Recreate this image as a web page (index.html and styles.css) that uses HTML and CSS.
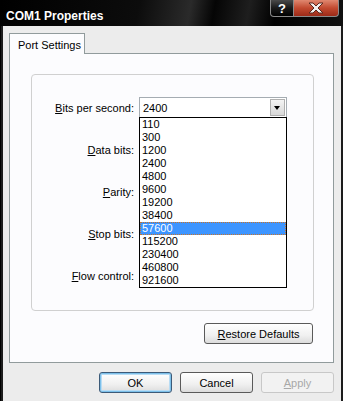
FILE: index.html
```html
<!DOCTYPE html>
<html lang="en">
<head>
  <meta charset="UTF-8">
  <title>COM1 Properties</title>
  <link rel="stylesheet" href="styles.css">
</head>
<body>
  <div class="window">
    <div class="titlebar">
      <span class="title">COM1 Properties</span>
      <div class="caption-btns">
        <span class="cap help">?</span>
        <span class="cap close">
          <svg width="18" height="12" viewBox="0 0 18 12">
            <path d="M2 1 L6 1 L9 4 L12 1 L16 1 L11 6 L16 11 L12 11 L9 8 L6 11 L2 11 L7 6 Z" fill="#f4f0ee" stroke="#5a2a20" stroke-width="1"/>
          </svg>
        </span>
      </div>
    </div>

    <div class="client">
      <div class="tabs">
        <div class="tab">Port Settings</div>
      </div>

      <div class="panel">
        <div class="group">
          <div class="row">
            <label><u>B</u>its per second:</label>
            <div class="combo">
              <span class="value">2400</span>
              <span class="drop-btn"></span>
              <ul class="droplist">
                <li>110</li>
                <li>300</li>
                <li>1200</li>
                <li>2400</li>
                <li>4800</li>
                <li>9600</li>
                <li>19200</li>
                <li>38400</li>
                <li class="selected">57600</li>
                <li>115200</li>
                <li>230400</li>
                <li>460800</li>
                <li>921600</li>
              </ul>
            </div>
          </div>
          <!-- the other combos sit under the open list -->
          <div class="row">
            <label><u>D</u>ata bits:</label>
            <div class="combo"><span class="drop-btn"></span></div>
          </div>
          <div class="row">
            <label><u>P</u>arity:</label>
            <div class="combo"><span class="drop-btn"></span></div>
          </div>
          <div class="row">
            <label><u>S</u>top bits:</label>
            <div class="combo"><span class="drop-btn"></span></div>
          </div>
          <div class="row">
            <label><u>F</u>low control:</label>
            <div class="combo"><span class="drop-btn"></span></div>
          </div>
        </div>

        <div class="restore-row">
          <button class="btn restore"><u>R</u>estore Defaults</button>
        </div>
      </div>

      <div class="footer">
        <button class="btn default">OK</button>
        <button class="btn">Cancel</button>
        <button class="btn disabled"><u>A</u>pply</button>
      </div>
    </div>
  </div>
</body>
</html>
```

FILE: styles.css
```css
body {
  margin: 0;
  padding: 0;
  background: #ffffff;
  font-family: "Liberation Sans", Arial, sans-serif;
  font-size: 11px;
  color: #000;
}
.window {
  width: 343px;
  height: 401px;
  background: #1c1c1c;
  border-left: 1px solid #000;
  box-sizing: border-box;
  display: flex;
  flex-direction: column;
}
.titlebar {
  height: 26px;
  display: flex;
  justify-content: space-between;
  align-items: flex-start;
  padding: 0 4px 0 5px;
  background: linear-gradient(100deg, #000 0%, #0c0c0c 40%, #2a2a2a 55%, #050505 62%, #1e1e1e 72%, #000 80%, #111 100%);
}
.title {
  color: #fff;
  font-weight: bold;
  font-size: 12px;
  margin-top: 9px;
}
.caption-btns {
  display: flex;
}
.cap {
  height: 17px;
  box-sizing: border-box;
  display: flex;
  align-items: center;
  justify-content: center;
  border: 1px solid #8a8a8a;
  border-top: none;
}
.help {
  width: 24px;
  border-radius: 0 0 0 4px;
  background: linear-gradient(#4a4a4a, #1a1a1a 50%, #000);
  color: #fff;
  font-weight: bold;
  font-size: 13px;
}
.close {
  width: 45px;
  border-left: none;
  border-radius: 0 0 4px 0;
  background: linear-gradient(#e08870, #c24a30 50%, #9c2a18);
}
.client {
  flex: 1;
  background: #ececec;
  margin: 0 2px 0 2px;
  padding: 7px 7px 0 6px;
  display: flex;
  flex-direction: column;
}
.tabs {
  display: flex;
  height: 20px;
}
.tab {
  width: 76px;
  box-sizing: border-box;
  background: #fcfcfe;
  border: 1px solid #919b9c;
  border-bottom: none;
  padding: 5px 0 0 8px;
  margin-bottom: -1px;
  position: relative;
  z-index: 1;
}
.panel {
  height: 310px;
  box-sizing: border-box;
  background: #fcfcfe;
  border: 1px solid #919b9c;
  display: flex;
  flex-direction: column;
}
.group {
  height: 237px;
  box-sizing: border-box;
  margin: 20px 19px 0 21px;
  border: 1px solid #d0d0d0;
  border-radius: 4px;
  padding-top: 22px;
  display: flex;
  flex-direction: column;
  gap: 21px;
}
.row {
  display: flex;
  align-items: center;
  height: 21px;
}
.row label {
  width: 102px;
  text-align: right;
  margin-right: 5px;
}
.combo {
  position: relative;
  width: 148px;
  height: 21px;
  box-sizing: border-box;
  border: 1px solid #a5acb2;
  background: #fff;
  display: flex;
  align-items: center;
  justify-content: space-between;
  padding: 0 1px 0 3px;
}
.combo .drop-btn:only-child {
  margin-left: auto;
}
.drop-btn {
  width: 15px;
  height: 17px;
  box-sizing: border-box;
  border: 1px solid #b0b0b0;
  background: linear-gradient(#f4f4f4, #d8d8d8);
  position: relative;
}
.drop-btn::after {
  content: "";
  position: absolute;
  left: 3px;
  top: 6px;
  border-left: 3.5px solid transparent;
  border-right: 3.5px solid transparent;
  border-top: 4px solid #000;
}
.droplist {
  position: absolute;
  top: 100%;
  left: -1px;
  width: 148px;
  box-sizing: border-box;
  margin: 0;
  padding: 0;
  list-style: none;
  background: #fff;
  border: 1px solid #000;
  z-index: 5;
}
.droplist li {
  height: 13px;
  line-height: 13px;
  padding-left: 2px;
}
.droplist li.selected {
  background: #3d95ff;
  color: #fff;
  outline: 1px dotted #c8742a;
  outline-offset: -1px;
}
.restore-row {
  display: flex;
  justify-content: flex-end;
  margin: 12px 20px 0 0;
}
.btn {
  font-family: "Liberation Sans", Arial, sans-serif;
  font-size: 11px;
  color: #000;
  height: 21px;
  box-sizing: border-box;
  border: 1px solid #5a5a5a;
  border-radius: 3px;
  background: linear-gradient(#ffffff, #f0f0f0 60%, #dcdcdc);
  padding: 0;
}
.restore {
  width: 109px;
}
.footer {
  display: flex;
  justify-content: flex-end;
  gap: 8px;
  margin-top: 9px;
}
.footer .btn {
  width: 73px;
}
.btn.default {
  box-shadow: inset 0 0 0 1px #7cc0ea, inset 0 0 0 2px #b8dcf4;
  border-color: #3c5a78;
}
.btn.disabled {
  color: #a8a8a8;
  border-color: #c8c8c8;
  background: #f2f2f2;
}
```
